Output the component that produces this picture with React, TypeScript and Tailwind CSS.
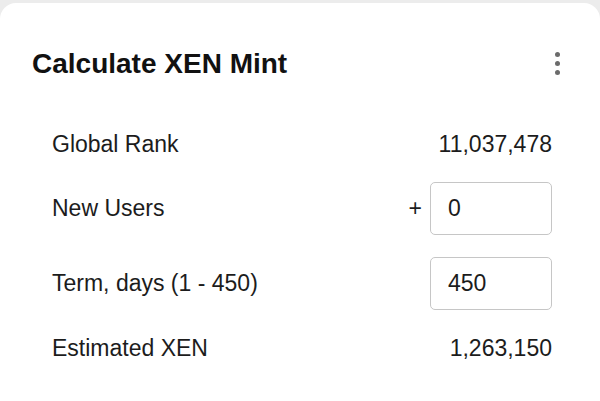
import React, { useState } from "react";

function Row({ label, children, tall }: { label: string; children: React.ReactNode; tall?: boolean }) {
	return (
		<div className={`flex items-center justify-between ${tall ? "h-[53px]" : "h-[32px]"}`}>
			<span>{label}</span>
			<div className="flex items-center">{children}</div>
		</div>
	);
}

export default function App() {
	const [newUsers, setNewUsers] = useState("0");
	const [term, setTerm] = useState("450");

	return (
		<div className="h-screen overflow-hidden bg-[#ececec] pt-[3px] font-['Liberation_Sans',Arial,sans-serif]">
			<div className="bg-white rounded-[16px] h-[430px] pt-[43px]">
				{/* Header */}
				<div className="flex items-center justify-between pl-[32px] pr-[36px] h-[36px]">
					<h1 className="text-[28px] font-bold text-[#111] leading-none">Calculate XEN Mint</h1>
					<button className="flex flex-col items-center gap-[4px] p-1 -mt-[2px]">
						<span className="w-[5px] h-[5px] rounded-full bg-[#6b6b6b]" />
						<span className="w-[5px] h-[5px] rounded-full bg-[#6b6b6b]" />
						<span className="w-[5px] h-[5px] rounded-full bg-[#6b6b6b]" />
					</button>
				</div>

				{/* Rows */}
				<div className="mt-[46px] pl-[52px] pr-[48px] flex flex-col gap-[22px] text-[23px] text-[#1c1c1c]">
					<Row label="Global Rank">
						<span>11,037,478</span>
					</Row>
					<Row label="New Users" tall>
						<span className="mr-[8px]">+</span>
						<input
							value={newUsers}
							onChange={(e) => setNewUsers(e.target.value)}
							className="w-[122px] h-[53px] border border-[#c6c6c6] rounded-[5px] pl-[17px] text-[23px] text-[#1c1c1c] outline-none"
						/>
					</Row>
					<Row label="Term, days (1 - 450)" tall>
						<input
							value={term}
							onChange={(e) => setTerm(e.target.value)}
							className="w-[122px] h-[53px] border border-[#c6c6c6] rounded-[5px] pl-[17px] text-[23px] text-[#1c1c1c] outline-none"
						/>
					</Row>
					<Row label="Estimated XEN">
						<span>1,263,150</span>
					</Row>
				</div>
			</div>
		</div>
	);
}
